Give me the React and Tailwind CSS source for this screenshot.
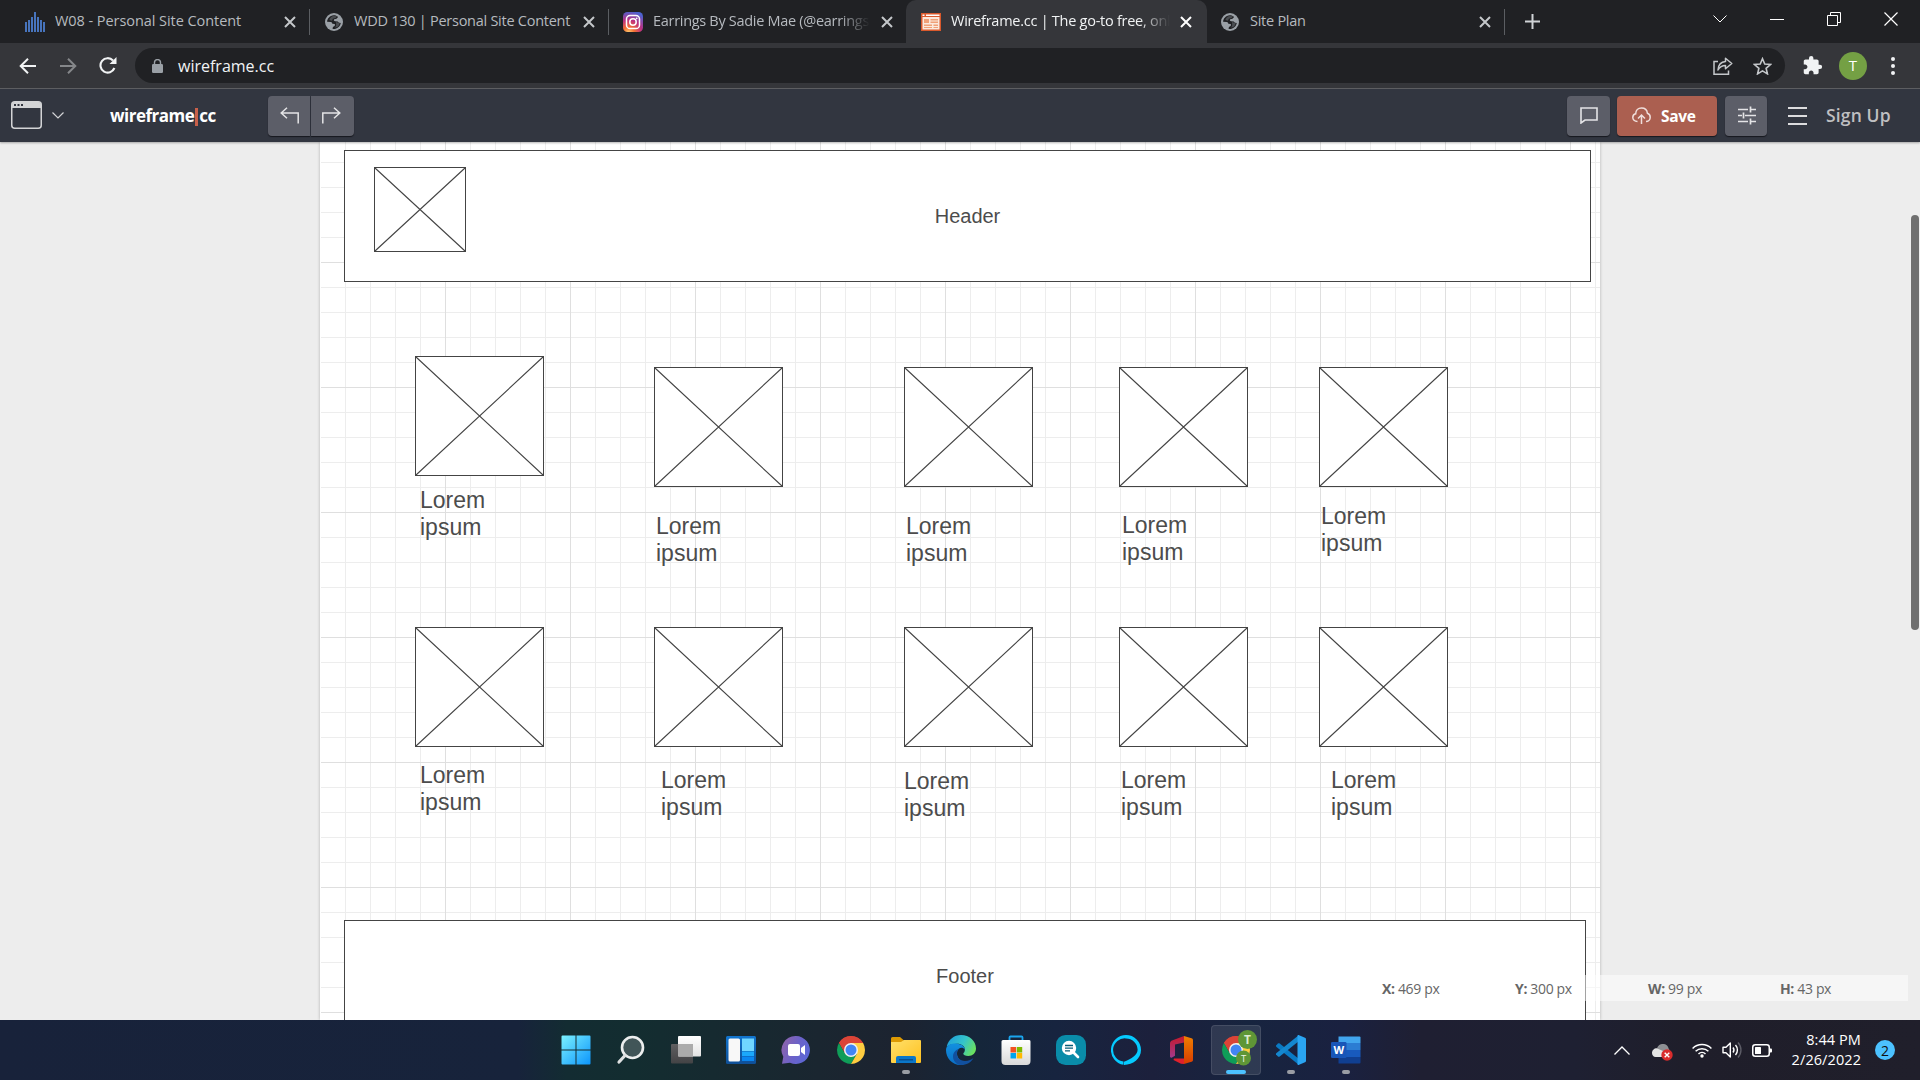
import React from "react";
import { MdExtension } from "react-icons/md";

const ui = "font-['Open_Sans','Noto_Sans',sans-serif]";

/* ---------- browser chrome ---------- */

function Cross({ className }) {
  return (
    <svg viewBox="0 0 12 12" className={`h-[12px] w-[12px] shrink-0 ${className}`} fill="none" stroke="currentColor" strokeWidth="2">
      <path d="M1 1l10 10M11 1L1 11" />
    </svg>
  );
}

function Globe() {
  return (
    <svg viewBox="0 0 18 18" className="h-[18px] w-[18px] shrink-0">
      <circle cx="9" cy="9" r="9" fill="#9aa0a6" />
      <path d="M8.6 2.2C5 2.600 2.200 5.400 2.100 8.800L5.800 9.100c1 .1 1.300.9 1.500 1.700l2.100.3c.8.3.7 1.300.2 1.800l-1.700 1.100-.3 1.900c3.900.6 7.400-1.900 8.200-5.900l-1.600-.3c-.7-.1-1-.6-1.400-1.100L10.200 8.200C9 8 8.400 7.200 9.200 6.300l2.300-.5 1.600-1.900C11.900 2.700 10.200 2.100 8.600 2.200z" fill="#202124" />
      <path d="M8.300 3l3.700.2-1.500 1.700-2.600.8-1 2.100-2.600-.9C5 5 6.300 3.600 8.300 3zM11 9l3.800 1.300-1.600 3.200-3 1.200 1-2.700z" fill="#9aa0a6" opacity=".35" />
    </svg>
  );
}

function Bars() {
  return (
    <svg viewBox="0 0 20 20" className="h-[20px] w-[20px] shrink-0" fill="#4774bd">
      <path d="M0 10h2v10H0zM3 8h2v12H3zM6 5h2v15H6zM9 0h2v20H9zM12 5h2v15h-2zM15 8h2v12h-2zM18 10h2v10h-2z" />
    </svg>
  );
}

function Insta() {
  return (
    <svg viewBox="0 0 20 20" className="h-[20px] w-[20px] shrink-0">
      <defs>
        <radialGradient id="ig" cx=".28" cy="1.05" r="1.1">
          <stop offset="0" stopColor="#fed576" />
          <stop offset=".26" stopColor="#f47133" />
          <stop offset=".6" stopColor="#bc3081" />
          <stop offset="1" stopColor="#4c63d2" />
        </radialGradient>
      </defs>
      <rect width="20" height="20" rx="4.500" fill="url(#ig)" />
      <rect x="3.500" y="3.500" width="13" height="13" rx="3.600" fill="none" stroke="#fff" strokeWidth="1.500" />
      <circle cx="10" cy="10" r="3.200" fill="none" stroke="#fff" strokeWidth="1.500" />
      <circle cx="13.700" cy="6.300" r=".9" fill="#fff" />
    </svg>
  );
}

function WireIcon() {
  return (
    <svg viewBox="0 0 20 18" className="h-[18px] w-[20px] shrink-0">
      <rect width="20" height="18" rx="1" fill="#fbe9dd" />
      <path d="M0 0h20v4H0zM0 4h1.500v14H0zM18.500 4H20v14h-1.500zM0 16.500h20V18H0z" fill="#d9592c" />
      <path d="M1.500 1.500h2v1.500h-2zM5 1.500h13.500v1.500H5z" fill="#fff" />
      <path d="M3 6h5v4H3zM9.500 6h7.500v1.500H9.500zM9.500 8.500h7.500V10H9.500zM3 11.500h8V13H3zM12.500 11.500H17V13h-4.500zM3 14h8v1H3zM12.500 14H17v1h-4.500z" fill="#f0a077" />
    </svg>
  );
}

function Tab({ icon, title, width, pad, gap, fade, track }) {
  return (
    <div className={`flex h-full shrink-0 items-center ${width} ${pad}`}>
      {icon}
      <span className={`mb-[2px] flex-1 overflow-hidden whitespace-nowrap ${gap} ${track} ${fade ? "[mask-image:linear-gradient(to_right,#000_86%,transparent)]" : ""}`}>
        {title}
      </span>
    </div>
  );
}

function TabStrip() {
  return (
    <div className="flex h-[43px] bg-[#35363a]">
      <div className={`flex h-full w-full bg-[#202124] text-[14.5px] leading-[20px] text-[#b6babf] ${ui}`}>
        <div className="flex w-[906px] shrink-0 items-center">
          <Tab icon={<Bars />} title="W08 - Personal Site Content" width="w-[284px]" pad="pl-[25px]" gap="ml-[10px]" track="tracking-[-0.06px]" />
          <Cross className="text-[#c4c7ca]" />
          <i className="ml-[13px] h-[26px] w-px bg-[#5b5e62]" />
          <Tab icon={<Globe />} title="WDD 130 | Personal Site Content" width="w-[273px]" pad="pl-[15px]" gap="ml-[11px]" track="tracking-[-0.26px]" />
          <Cross className="text-[#c4c7ca]" />
          <i className="ml-[13px] h-[26px] w-px bg-[#5b5e62]" />
          <Tab icon={<Insta />} title="Earrings By Sadie Mae (@earrings" width="w-[261px]" pad="pl-[14px]" gap="ml-[10px]" fade track="tracking-[-0.3px]" />
          <Cross className="ml-[11px] text-[#c4c7ca]" />
        </div>
        <div className="flex w-[301px] shrink-0 items-center rounded-t-[10px] bg-[#35363a] text-[#f1f3f4]">
          <Tab icon={<WireIcon />} title="Wireframe.cc | The go-to free, onl" width="w-[264px]" pad="pl-[15px]" gap="ml-[10px]" fade track="tracking-[-0.26px]" />
          <Cross className="ml-[10px] text-white" />
        </div>
        <div className="flex flex-1 items-center">
          <Tab icon={<Globe />} title="Site Plan" width="w-[272px]" pad="pl-[14px]" gap="ml-[11px]" track="tracking-[-0.26px]" />
          <Cross className="text-[#c4c7ca]" />
          <i className="ml-[13px] h-[26px] w-px bg-[#5b5e62]" />
          <svg viewBox="0 0 15 15" className="ml-[20px] h-[15px] w-[15px]" stroke="#d0d3d6" strokeWidth="2">
            <path d="M7.500 0v15M0 7.500h15" />
          </svg>
          <div className="mb-[5px] ml-auto flex items-center pr-[22px] text-white">
            <svg viewBox="0 0 14 8" className="h-[8px] w-[14px]" fill="none" stroke="currentColor"><path d="M.5.500L7 7 13.500.500" /></svg>
            <i className="ml-[43px] h-px w-[14px] bg-white" />
            <svg viewBox="0 0 14 14" className="ml-[43px] h-[14px] w-[14px]" fill="none" stroke="currentColor"><path d="M.5 3.500h10v10H.5zM3.500 3.500v-3h10v10h-3" /></svg>
            <svg viewBox="0 0 14 14" className="ml-[43px] h-[14px] w-[14px]" fill="none" stroke="currentColor" strokeWidth="1.200"><path d="M.5.500l13 13M13.500.500l-13 13" /></svg>
          </div>
        </div>
      </div>
    </div>
  );
}

function AddressBar() {
  return (
    <div className="flex h-[46px] items-center border-b border-[#5f6063] bg-[#35363a] pl-[19px]">
      <svg viewBox="0 0 17 16" className="h-[16px] w-[17px]" fill="none" stroke="#f1f3f4" strokeWidth="2"><path d="M17 8H2M9 .8L1.700 8 9 15.200" /></svg>
      <svg viewBox="0 0 17 16" className="ml-[24px] h-[16px] w-[17px]" fill="none" stroke="#85878a" strokeWidth="2"><path d="M0 8h15M8 .8L15.300 8 8 15.200" /></svg>
      <svg viewBox="0 0 18 17" className="ml-[22px] h-[17px] w-[18px]" fill="none" stroke="#f1f3f4" strokeWidth="2.100">
        <path d="M15.400 11A7.200 7.200 0 1 1 14 3.500" />
        <path d="M17.500 0v7h-7z" fill="#f1f3f4" stroke="none" />
      </svg>
      <div className={`ml-[18px] flex h-[35px] w-[1650px] items-center rounded-full bg-[#202124] pl-[17px] pr-[13px] text-[16px] text-[#f1f3f4] ${ui}`}>
        <svg viewBox="0 0 11 14" className="h-[14px] w-[11px]"><rect y="5" width="11" height="9" rx="1.200" fill="#9aa0a6" /><path d="M2.500 6V3.600a3 3 0 0 1 6 0V6" fill="none" stroke="#9aa0a6" strokeWidth="1.400" /></svg>
        <span className="ml-[15px]">wireframe.cc</span>
        <svg viewBox="0 0 20 18" className="ml-auto h-[18px] w-[20px]" fill="none" stroke="#c4c7ca" strokeWidth="1.500">
          <path d="M5 4.500H1v12.700h14.500V13.500" />
          <path d="M12.500 1.200L18.800 6.500l-6.300 5.300V8.500c-3.600 0-5.800 1.500-7.500 4.500.3-4.500 3-8 7.500-8.400z" strokeLinejoin="round" />
        </svg>
        <svg viewBox="0 0 20 19" className="ml-[20px] h-[18px] w-[19px]" fill="none" stroke="#c4c7ca" strokeWidth="1.700">
          <path d="M10 1.800l2.400 5.600 6 .5-4.600 4 1.400 5.900L10 14.700l-5.200 3.100 1.400-5.900-4.600-4 6-.5z" />
        </svg>
      </div>
      <MdExtension className="ml-[17px] h-[21px] w-[21px] text-[#f1f3f4]" />
      <div className={`ml-[16px] flex h-[28px] w-[28px] items-center justify-center rounded-full bg-[#74a044] text-[15px] text-white ${ui}`}>T</div>
      <div className="ml-[24px] flex flex-col gap-[3px]">
        <i className="h-[4px] w-[4px] rounded-full bg-[#f1f3f4]" />
        <i className="h-[4px] w-[4px] rounded-full bg-[#f1f3f4]" />
        <i className="h-[4px] w-[4px] rounded-full bg-[#f1f3f4]" />
      </div>
    </div>
  );
}

/* ---------- wireframe.cc toolbar ---------- */

const btn = "flex h-[40px] items-center justify-center bg-[#5c5e68] shadow-[0_1px_1px_#16181e]";

function AppBar() {
  return (
    <div className={`relative z-10 flex h-[53px] items-center bg-[#323640] pl-[11px] shadow-[0_1px_2px_rgba(0,0,0,0.3)] ${ui}`}>
      <svg viewBox="0 0 31 28" className="mb-[2px] h-[28px] w-[31px]">
        <rect x=".75" y=".75" width="29.500" height="26.500" rx="3" fill="none" stroke="#d3d4d6" strokeWidth="1.500" />
        <path d="M1 7V3.500A2.500 2.500 0 0 1 3.500 1h24A2.500 2.500 0 0 1 30 3.500V7z" fill="#d3d4d6" />
        <path d="M3 3h2v2H3zM6.500 3h2v2h-2zM10 3h2v2h-2z" fill="#323640" />
      </svg>
      <svg viewBox="0 0 12 7" className="ml-[10px] h-[7px] w-[12px]" fill="none" stroke="#d3d4d6" strokeWidth="1.200"><path d="M.5.500L6 6 11.500.500" /></svg>
      <div className="ml-[46px] flex w-[108px] items-center text-[17px] font-bold tracking-[-0.5px] text-white">
        wireframe<i className="mx-[1px] mt-[2px] h-[18px] w-[3px] shrink-0 bg-[#c8604a]" />cc
      </div>
      <div className={`${btn} ml-[50px] w-[42px] rounded-l-[4px]`}>
        <svg viewBox="0 0 19 17" className="h-[17px] w-[19px]" fill="none" stroke="#e4e4e6" strokeWidth="1.500"><path d="M7 .7L1.200 6 7 11.300M1.200 6H18.200v10.500" /></svg>
      </div>
      <div className={`${btn} ml-px w-[43px] rounded-r-[4px]`}>
        <svg viewBox="0 0 19 17" className="mr-[2px] h-[17px] w-[19px]" fill="none" stroke="#e4e4e6" strokeWidth="1.500"><path d="M12 .7L17.800 6 12 11.300M17.800 6H.8v10.500" /></svg>
      </div>
      <div className={`${btn} ml-auto w-[43px] rounded-[4px]`}>
        <svg viewBox="0 0 18 17" className="ml-[1px] h-[17px] w-[18px]" fill="none" stroke="#e4e4e6" strokeWidth="1.600"><path d="M1 1h16v12H5L1 16z" /></svg>
      </div>
      <div className="ml-[7px] flex h-[40px] w-[100px] items-center rounded-[4px] bg-[#ab5f50] pl-[15px] text-[15.5px] font-bold tracking-[-0.35px] text-white shadow-[0_1px_1px_#16181e]">
        <svg viewBox="0 0 19 17" className="h-[17px] w-[19px]" fill="none" stroke="#f0dfdc" strokeWidth="1.500">
          <path d="M5.500 14.500C2.500 14.500.8 12.600.8 10.500c0-2 1.300-3.300 2.900-3.700C3.700 3.300 6.200.9 9.500.9c3.300 0 5.600 2.200 5.900 5.300 1.700.6 2.800 2 2.800 4 0 2.300-1.700 4.300-4.200 4.300M9.500 17V8.200M6 11.500L9.500 8l3.500 3.500" />
        </svg>
        <span className="ml-[10px] mt-[2px]">Save</span>
      </div>
      <div className={`${btn} ml-[8px] w-[42px] rounded-[4px]`}>
        <svg viewBox="0 0 18 19" className="ml-[1px] h-[19px] w-[18px]" fill="none" stroke="#e4e4e6" strokeWidth="1.700"><path d="M0 3.500h10M13 3.500h5M12.500.5v6M0 9.500h4M7 9.500h11M5.500 6.500v6M0 15.500h10M13 15.500h5M12.500 12.500v6" /></svg>
      </div>
      <div className="ml-[21px] flex w-[19px] flex-col gap-[6px]">
        <i className="h-[2px] bg-[#dcdcde]" />
        <i className="h-[2px] bg-[#dcdcde]" />
        <i className="h-[2px] bg-[#dcdcde]" />
      </div>
      <div className="ml-[19px] mr-[28px] w-[66px] whitespace-nowrap text-[17.5px] font-semibold tracking-[0.15px] text-[#bfbfc1]">Sign Up</div>
    </div>
  );
}

/* ---------- drawing canvas ---------- */

function Placeholder({ w, h, className }) {
  return (
    <svg viewBox={`0 0 ${w} ${h}`} width={w} height={h} className={`absolute ${className}`}>
      <rect x=".5" y=".5" width={w - 1} height={h - 1} fill="#fff" stroke="#444" />
      <path d={`M1 1L${w - 1} ${h - 1}M${w - 1} 1L1 ${h - 1}`} stroke="#444" strokeWidth="1.100" />
    </svg>
  );
}

const pictures = [
  "left-[95px] top-[214px]",
  "left-[334px] top-[225px]",
  "left-[584px] top-[225px]",
  "left-[799px] top-[225px]",
  "left-[999px] top-[225px]",
  "left-[95px] top-[485px]",
  "left-[334px] top-[485px]",
  "left-[584px] top-[485px]",
  "left-[799px] top-[485px]",
  "left-[999px] top-[485px]",
];

const captions = [
  "left-[100px] top-[345px]",
  "left-[336px] top-[371px]",
  "left-[586px] top-[371px]",
  "left-[802px] top-[370px]",
  "left-[1001px] top-[361px]",
  "left-[100px] top-[620px]",
  "left-[341px] top-[625px]",
  "left-[584px] top-[626px]",
  "left-[801px] top-[625px]",
  "left-[1011px] top-[625px]",
];

function Canvas() {
  return (
    <div className="relative h-[878px] overflow-hidden bg-[#ededed] font-['Liberation_Sans',Arial,sans-serif] text-[#4c4c4c]">
      <div className="relative ml-[320px] h-full w-[1280px] bg-white shadow-[0_0_3px_rgba(0,0,0,0.25)]">
        <svg width="1280" height="878" className="absolute left-0 top-0">
          <defs>
            <pattern id="minor" width="25" height="25" patternUnits="userSpaceOnUse" x="0" y="20">
              <path d="M0 .5h25M.5 0v25" stroke="#ededed" />
            </pattern>
            <pattern id="major" width="125" height="125" patternUnits="userSpaceOnUse" x="0" y="120">
              <path d="M0 .5h125M.5 0v125" stroke="#dfdfdf" />
            </pattern>
          </defs>
          <rect x="1" width="1279" height="878" fill="url(#minor)" />
          <rect x="1" width="1279" height="878" fill="url(#major)" />
        </svg>
        <div className="absolute left-[24px] top-[8px] flex h-[132px] w-[1247px] items-center justify-center border border-[#444] bg-white text-[20px]">
          Header
        </div>
        <Placeholder w={92} h={85} className="left-[54px] top-[25px]" />
        {pictures.map((p) => (
          <Placeholder key={p} w={129} h={120} className={p} />
        ))}
        {captions.map((c) => (
          <div key={c} className={`absolute w-[80px] text-[23px] leading-[27px] ${c}`}>
            Lorem ipsum
          </div>
        ))}
        <div className="absolute left-[24px] top-[778px] flex h-[113px] w-[1242px] items-center justify-center border border-[#444] bg-white pb-[2px] text-[20px]">
          Footer
        </div>
      </div>
      <div className={`absolute left-[1368px] top-[833px] grid h-[26px] w-[540px] grid-cols-[133px_133px_132px_1fr] items-center bg-white/50 pl-[14px] text-[14px] tracking-[-0.35px] text-[#666] ${ui}`}>
        <span><b>X:</b> 469 px</span>
        <span><b>Y:</b> 300 px</span>
        <span><b>W:</b> 99 px</span>
        <span><b>H:</b> 43 px</span>
      </div>
      <div className="absolute right-0 top-[73px] flex h-[415px] w-[10px] justify-center">
        <div className="h-full w-[8px] rounded-full bg-[#6f6f6f]" />
      </div>
    </div>
  );
}

/* ---------- taskbar ---------- */

function Svg({ children }) {
  return <svg viewBox="0 0 30 30" className="h-[30px] w-[30px]">{children}</svg>;
}

function Grad({ id, a, b, diag }) {
  return (
    <linearGradient id={id} x1="0" y1="0" x2={diag ? 1 : 0} y2="1">
      <stop offset="0" stopColor={a} />
      <stop offset="1" stopColor={b} />
    </linearGradient>
  );
}

function Chrome({ cx = 15, cy = 15, s = 1 }) {
  return (
    <g transform={`translate(${cx} ${cy}) scale(${s})`}>
      <path d="M0 0L-12.120-7A14 14 0 0 1 12.120-7z" fill="#db4437" />
      <path d="M0-14A14 14 0 0 1 12.120-7H0zM-12.120-7A14 14 0 0 1 0-14V-7L-6.060 3.500z" fill="#db4437" />
      <path d="M-12.120-7A14 14 0 0 0 0 14L6.060 3.500-6.060 3.500z" fill="#0f9d58" />
      <path d="M12.120-7A14 14 0 0 1 0 14L6.060 3.500 0-7z" fill="#ffcd40" />
      <circle r="7" fill="#f1f1f1" />
      <circle r="5.500" fill="#4285f4" />
    </g>
  );
}

const apps = [
  {
    id: "start",
    icon: (
      <Svg>
        <defs><linearGradient id="win" gradientUnits="userSpaceOnUse" x1="0" y1="0" x2="30" y2="30"><stop offset="0" stopColor="#7df3ff" /><stop offset="1" stopColor="#0a93fb" /></linearGradient></defs>
        <path d="M.5 1.500A1 1 0 0 1 1.500.500H14.500V14.500H.5zM15.500.500H28.500a1 1 0 0 1 1 1V14.500H15.500zM.5 15.500H14.500V29.500H1.500a1 1 0 0 1-1-1zM15.500 15.500H29.500v13a1 1 0 0 1-1 1H15.500z" fill="url(#win)" />
      </Svg>
    ),
  },
  {
    id: "search",
    icon: (
      <Svg>
        <circle cx="16.500" cy="12.500" r="10.500" fill="#415558" stroke="#eceeee" strokeWidth="2.600" />
        <path d="M9 20.500L3 27" stroke="#dfe1e2" strokeWidth="3.200" strokeLinecap="round" />
      </Svg>
    ),
  },
  {
    id: "taskview",
    icon: (
      <Svg>
        <defs><Grad id="tv" a="#5f5f61" b="#434345" /><Grad id="tw" a="#fff" b="#e3e3e3" /></defs>
        <rect x="0" y="9" width="22" height="19.500" rx="1" fill="url(#tv)" />
        <rect x="7" y="1" width="23" height="20.500" rx="1" fill="url(#tw)" />
        <path d="M7 9h15v12.500H8a1 1 0 0 1-1-1z" fill="#ababab" />
      </Svg>
    ),
  },
  {
    id: "widgets",
    icon: (
      <Svg>
        <defs><Grad id="wd" a="#1175cf" b="#0f4f97" /></defs>
        <rect y="1" width="30" height="28" rx="1.500" fill="url(#wd)" />
        <rect x="2.500" y="3.500" width="11.500" height="23" rx="1.500" fill="#f8f8f8" />
        <path d="M16 3.500h12v12.500H16z" fill="#70d6ff" />
        <path d="M16 16.500h12v4.500H16z" fill="#1ba8fb" />
        <path d="M16 21.500h12v4.500H16z" fill="#0a86f0" />
      </Svg>
    ),
  },
  {
    id: "chat",
    icon: (
      <Svg>
        <defs><linearGradient id="ch" x1="0" y1=".3" x2="1" y2=".7"><stop offset="0" stopColor="#8d63ac" /><stop offset=".5" stopColor="#6b62c9" /><stop offset="1" stopColor="#5a68d8" /></linearGradient></defs>
        <path d="M15 1a14 14 0 1 1-6 26.700L1 28.800l1.300-7A14 14 0 0 1 15 1z" fill="url(#ch)" />
        <rect x="7" y="9" width="12" height="12" rx="2" fill="#fff" />
        <path d="M20 13l4-3v10l-4-3z" fill="#fff" />
      </Svg>
    ),
  },
  { id: "chrome", icon: <Svg><Chrome /></Svg> },
  {
    id: "explorer",
    run: true,
    icon: (
      <Svg>
        <defs><Grad id="fo" a="#ffe06b" b="#ffc11f" diag /></defs>
        <path d="M0 3.500A1.500 1.500 0 0 1 1.500 2H9l4 3.500V10H0z" fill="#dd9a03" />
        <path d="M0 7h10l3-2h16a1 1 0 0 1 1 1v21a1 1 0 0 1-1 1H1a1 1 0 0 1-1-1z" fill="url(#fo)" />
        <path d="M5 28v-5a2 2 0 0 1 2-2h16a2 2 0 0 1 2 2v5z" fill="#0b77c9" />
        <path d="M8 24h14v1.500H8z" fill="#0a4f8f" />
      </Svg>
    ),
  },
  {
    id: "edge",
    icon: (
      <Svg>
        <defs>
          <linearGradient id="e1" x1="0" y1=".2" x2="1" y2=".6"><stop offset="0" stopColor="#1e9fdc" /><stop offset=".55" stopColor="#35c4c9" /><stop offset="1" stopColor="#6be05e" /></linearGradient>
          <Grad id="e2" a="#1290e0" b="#0b6ec4" />
        </defs>
        <path d="M.7 11.500C2.500 4.500 8 0 15 0c8.500 0 15 6 15 13.500 0 4.500-3.400 7.500-7.700 7.500-3.200 0-5-1.200-5-2.300 0-.9 1.600-1.400 1.600-4 0-3.500-3.200-6-8-6C6.500 8.700 2.800 10 .7 11.500z" fill="url(#e1)" />
        <path d="M0 15C0 10.500 4.500 8.500 9 8.500c5 0 9.700 2.200 9.900 6.200-2-3-6.900-2.400-7.800 2.300-1 5.500 3.700 10.500 9.900 10.500C19 29 17 30 14.500 30 6 30 0 23 0 15z" fill="url(#e2)" />
        <path d="M11 17c-1 5.500 3 9 8 9 3.500 0 7-1.500 8.500-3-2.300 4.600-7 7-12.500 7-5-.5-8-4.500-8-8.500 0-4 3-7 6-7.500-1 .7-1.800 1.700-2 3z" fill="#11509f" />
      </Svg>
    ),
  },
  {
    id: "store",
    icon: (
      <Svg>
        <defs><Grad id="st" a="#fff" b="#d9d9d9" /></defs>
        <path d="M8.500 7V2.500a1 1 0 0 1 1-1h11a1 1 0 0 1 1 1V7" fill="none" stroke="#1aa5ee" strokeWidth="1.800" />
        <path d="M.5 6.500a1.500 1.500 0 0 1 1.500-1.500h26a1.500 1.500 0 0 1 1.500 1.500V26a4 4 0 0 1-4 4h-21a4 4 0 0 1-4-4z" fill="url(#st)" />
        <path d="M9.500 12H15v5.500H9.500z" fill="#f25022" />
        <path d="M15.700 12h5.500v5.500h-5.500z" fill="#7fba00" />
        <path d="M9.500 18H15v5.500H9.500z" fill="#00a4ef" />
        <path d="M15.700 18h5.500v5.500h-5.500z" fill="#ffb900" />
      </Svg>
    ),
  },
  {
    id: "finder",
    icon: (
      <Svg>
        <rect width="30" height="30" rx="9.500" fill="#0a8ca9" />
        <circle cx="13" cy="13" r="7.200" fill="#fff" />
        <path d="M17.500 17.500l4.500 4.500" stroke="#fff" strokeWidth="2.600" strokeLinecap="round" />
        <path d="M9 10.500h8M9 13.200h8M9 15.900h5" stroke="#0a5f79" strokeWidth="1.300" />
      </Svg>
    ),
  },
  {
    id: "alexa",
    icon: (
      <Svg>
        <path d="M15 0a15 15 0 0 0-2.500 29.800v-3.200A11.600 11.600 0 0 1 15 3.400a11.600 11.600 0 0 1 11.600 11.200c.2 5.400-6.600 9.500-13.600 12.200V30C22 29.500 30 24 30 15A15 15 0 0 0 15 0z" fill="#05caff" />
      </Svg>
    ),
  },
  {
    id: "office",
    icon: (
      <Svg>
        <defs><Grad id="o1" a="#c6192b" b="#a13a8d" /><Grad id="o2" a="#f08000" b="#d83b01" /></defs>
        <path d="M18 1L6 5.500C4.800 6 4 7 4 8.500v13c0 1 1 1.500 2 1l3-1.800V9.500l9-2z" fill="url(#o1)" />
        <path d="M8 23.500h10V29l-3-.2L7.500 25z" fill="#e0202c" />
        <path d="M18 1l7.500 2.200C26.500 3.600 27 4.300 27 5.300v19.500c0 1-.5 1.700-1.500 2L18 29z" fill="url(#o2)" />
      </Svg>
    ),
  },
  {
    id: "profile",
    active: true,
    icon: (
      <svg viewBox="0 0 38 38" className="h-[38px] w-[38px] translate-x-[3px] translate-y-[-1px]">
        <Chrome cx={16} cy={20} />
        <circle cx="27.500" cy="9.500" r="9.500" fill="#5f9636" />
        <circle cx="23.500" cy="28" r="7.500" fill="#5f9636" />
        <text x="27.500" y="14" textAnchor="middle" fontSize="12" fontWeight="700" fontFamily="Open Sans" fill="#dcebd0">T</text>
        <text x="23.500" y="31.500" textAnchor="middle" fontSize="9.500" fontFamily="Open Sans" fill="#eef5e8">T</text>
      </svg>
    ),
  },
  {
    id: "code",
    run: true,
    icon: (
      <Svg>
        <path d="M0 10.500l2-2c.5-.5 1.200-.4 1.700 0L23 24v6L.5 12c-.5-.5-.8-1-.5-1.500z" fill="#0a7ac4" />
        <path d="M0 19.500l2 2c.5.500 1.200.4 1.700 0L23 6V0L.5 18c-.5.500-.8 1-.5 1.500z" fill="#1487cf" />
        <path d="M22.500 0L29 2.800c.6.300 1 .8 1 1.500v21.400c0 .7-.4 1.200-1 1.500L22.500 30c-1 .4-1-1-1-2V2c0-1 0-2.400 1-2z" fill="#2aa5f2" />
      </Svg>
    ),
  },
  {
    id: "word",
    run: true,
    icon: (
      <Svg>
        <path d="M7.500 1.500h21a1 1 0 0 1 1 1V8h-22z" fill="#41a5ee" />
        <path d="M7.500 8h22v7h-22z" fill="#2b7cd3" />
        <path d="M7.500 15h22v7h-22z" fill="#185abd" />
        <path d="M7.500 22h22v5.500a1 1 0 0 1-1 1h-21z" fill="#103f91" />
        <rect x="0" y="7" width="15.500" height="16" rx="1.300" fill="#1856b8" />
        <text x="7.700" y="19" textAnchor="middle" fontSize="11" fontWeight="700" fontFamily="Open Sans" fill="#fff">W</text>
      </Svg>
    ),
  },
];

function Taskbar() {
  return (
    <div className={`flex h-[60px] items-center bg-[linear-gradient(90deg,#18223a_0%,#17233b_27%,#132c32_29.5%,#132d30_33%,#1b2530_44%,#1c2330_47%,#15263a_51%,#17243f_55%,#1c203c_60%,#17243f_65%,#1a2140_70%,#1f1f32_74%,#1e2032_82%,#1f1e2a_88%,#201f2b_100%)] pl-[548px] text-white ${ui}`}>
      <div className="flex h-full">
        {apps.map((a) => (
          <div key={a.id} className="flex h-full w-[55px] items-center justify-center">
            <div className={`relative flex h-[50px] w-[50px] items-center justify-center rounded-[4px] ${a.active ? "border border-white/10 bg-white/10" : ""}`}>
              {a.icon}
              {a.run && <i className="absolute bottom-[1px] h-[4px] w-[8px] rounded-full bg-[#9a9da4]" />}
              {a.active && <i className="absolute bottom-0 h-[4px] w-[20px] rounded-full bg-[#4cc2ff]" />}
            </div>
          </div>
        ))}
      </div>
      <svg viewBox="0 0 16 9" className="ml-[241px] h-[9px] w-[16px] shrink-0" fill="none" stroke="#fff" strokeWidth="1.300"><path d="M.5 8.500L8 1l7.500 7.500" /></svg>
      <svg viewBox="0 0 21 18" className="ml-[22px] mt-[4px] h-[18px] w-[21px] shrink-0">
        <path d="M5 5.500C6 1.500 9.500.500 12 1c2.500.5 4 2 4.500 4.200L18 8l-8 3z" fill="#8e9094" />
        <path d="M0 10c0-2.700 2-4.800 4.800-4.800L12 8.500v5.500H3.500C1.500 14 0 12.300 0 10z" fill="#e4e4e4" />
        <circle cx="15" cy="12" r="5.700" fill="#d92c2c" />
        <path d="M12.700 9.700l4.600 4.600M17.300 9.700l-4.600 4.600" stroke="#fff" strokeWidth="1.400" />
      </svg>
      <svg viewBox="0 0 20 15" className="ml-[19px] h-[15px] w-[20px] shrink-0" fill="none" stroke="#fff" strokeWidth="1.500">
        <path d="M.6 5.500a13.300 13.300 0 0 1 18.800 0M3.600 8.300a9 9 0 0 1 12.800 0M6.500 11a5 5 0 0 1 7 0" />
        <circle cx="10" cy="13" r="1.700" fill="#fff" stroke="none" />
      </svg>
      <svg viewBox="0 0 20 18" className="ml-[10px] h-[18px] w-[20px] shrink-0" fill="none" stroke="#fff" strokeWidth="1.400">
        <path d="M1 6.200h3L8.300 2v14L4 11.800H1z" strokeLinejoin="round" />
        <path d="M11 6.500a4 4 0 0 1 0 5M13.500 4a7.500 7.500 0 0 1 0 10" />
        <path d="M16 1.500a11 11 0 0 1 0 15" stroke="#5c5c66" />
      </svg>
      <svg viewBox="0 0 20 13" className="ml-[10px] h-[13px] w-[20px] shrink-0">
        <rect x=".75" y=".75" width="16.500" height="11.500" rx="2.500" fill="none" stroke="#fff" strokeWidth="1.500" />
        <rect x="3" y="3" width="6" height="7" rx=".6" fill="#fff" />
        <path d="M18 4.500h1a1 1 0 0 1 1 1v2a1 1 0 0 1-1 1h-1z" fill="#fff" />
      </svg>
      <div className="ml-auto whitespace-nowrap text-right text-[14.5px] leading-[20px] tracking-[0.08px]">
        8:44 PM
        <br />
        2/26/2022
      </div>
      <div className="ml-[14px] mr-[25px] flex h-[20px] w-[20px] shrink-0 items-center justify-center rounded-full bg-[#4cc2ff] text-[14px] text-[#111]">2</div>
    </div>
  );
}

export default function App() {
  return (
    <div className="flex h-[1080px] w-[1920px] flex-col overflow-hidden bg-[#35363a]">
      <TabStrip />
      <AddressBar />
      <AppBar />
      <Canvas />
      <Taskbar />
    </div>
  );
}
